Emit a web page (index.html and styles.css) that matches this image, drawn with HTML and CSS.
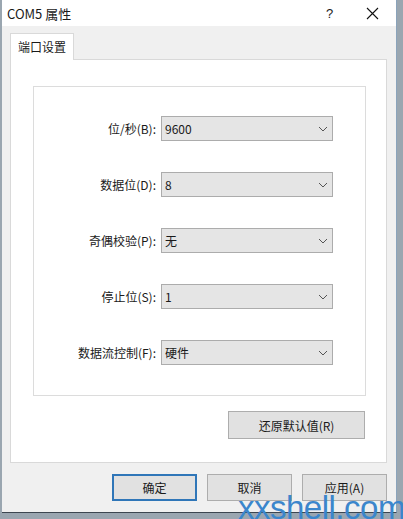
FILE: index.html
```html
<!DOCTYPE html>
<html lang="zh-CN">
<head>
    <meta charset="UTF-8">
    <title>COM5 属性</title>
    <link rel="stylesheet" href="styles.css">
</head>
<body>

<div class="ventana">
    <div class="titulo">
        <span class="titulo-texto">COM5 属性</span>
        <span class="ayuda">?</span>
        <span class="cerrar">
            <svg width="13" height="13" viewBox="0 0 13 13"><path d="M1 1 L12 12 M12 1 L1 12" stroke="#111" stroke-width="1.1" fill="none"/></svg>
        </span>
    </div>
    <div class="cuerpo">
        <div class="pestana">端口设置</div>
        <div class="pagina">
            <div class="grupo">
                <label>位/秒(B):</label>
                <div class="combo"><span>9600</span><svg width="10" height="6" viewBox="0 0 10 6"><path d="M1 1 L5 5 L9 1" stroke="#555" stroke-width="1" fill="none"/></svg></div>
                <label>数据位(D):</label>
                <div class="combo"><span>8</span><svg width="10" height="6" viewBox="0 0 10 6"><path d="M1 1 L5 5 L9 1" stroke="#555" stroke-width="1" fill="none"/></svg></div>
                <label>奇偶校验(P):</label>
                <div class="combo"><span>无</span><svg width="10" height="6" viewBox="0 0 10 6"><path d="M1 1 L5 5 L9 1" stroke="#555" stroke-width="1" fill="none"/></svg></div>
                <label>停止位(S):</label>
                <div class="combo"><span>1</span><svg width="10" height="6" viewBox="0 0 10 6"><path d="M1 1 L5 5 L9 1" stroke="#555" stroke-width="1" fill="none"/></svg></div>
                <label>数据流控制(F):</label>
                <div class="combo"><span>硬件</span><svg width="10" height="6" viewBox="0 0 10 6"><path d="M1 1 L5 5 L9 1" stroke="#555" stroke-width="1" fill="none"/></svg></div>
            </div>
            <div class="fila-reset">
                <button class="boton boton-reset">还原默认值(R)</button>
            </div>
        </div>
        <div class="pie">
            <button class="boton activo">确定</button>
            <button class="boton">取消</button>
            <button class="boton">应用(A)</button>
        </div>
    </div>
</div>

<div class="marca">xxshell.com</div>

</body>
</html>
```

FILE: styles.css
```css
body {
    margin: 0;
    width: 403px;
    height: 519px;
    overflow: hidden;
    position: relative;
    background: #9aa6b0;
    font-family: "Microsoft YaHei UI", "Noto Sans CJK SC", sans-serif;
    font-size: 12px;
    color: #1a1a1a;
}
.ventana {
    margin-left: 2px;
    width: 394px;
    height: 512px;
    background: #f0f0f0;
    border-right: 1px solid #8aa3bb;
    border-bottom: 1px solid #3c4650;
    display: flex;
    flex-direction: column;
}
.titulo {
    height: 26px;
    background: white;
    display: flex;
    align-items: center;
    flex-shrink: 0;
}
.titulo-texto {
    padding-left: 5px;
    font-size: 13px;
    flex: 1;
}
.ayuda {
    width: 16px;
    margin-right: 24px;
    font-family: "Liberation Sans", sans-serif;
    font-size: 13px;
}
.cerrar {
    width: 13px;
    margin-right: 17px;
    display: flex;
}
.cuerpo {
    padding: 7px 9px 0 8px;
    display: flex;
    flex-direction: column;
}
.pestana {
    align-self: flex-start;
    height: 26px;
    line-height: 25px;
    padding: 0 7px;
    background: white;
    border: 1px solid #d9d9d9;
    border-bottom: none;
    position: relative;
    z-index: 1;
}
.pagina {
    height: 404px;
    background: white;
    border: 1px solid #d9d9d9;
    margin-top: -1px;
    padding: 26px 20px 0 22px;
    box-sizing: border-box;
}
.grupo {
    height: 310px;
    box-sizing: border-box;
    border: 1px solid #dcdcdc;
    display: grid;
    grid-template-columns: 122px 172px;
    grid-auto-rows: 25px;
    column-gap: 5px;
    row-gap: 31px;
    padding-top: 29px;
    align-content: start;
}
.grupo label {
    text-align: right;
    line-height: 25px;
}
.combo {
    background: #e5e5e5;
    border: 1px solid #acacac;
    box-sizing: border-box;
    display: flex;
    align-items: center;
    justify-content: space-between;
    padding: 0 4px 0 3px;
}
.fila-reset {
    display: flex;
    justify-content: flex-end;
    margin-top: 15px;
    padding-right: 1px;
}
.boton {
    font-family: inherit;
    font-size: 12px;
    color: #1a1a1a;
    background: #e1e1e1;
    border: 1px solid #adadad;
    width: 85px;
    height: 27px;
    padding: 0;
}
.boton-reset {
    width: 137px;
    height: 28px;
}
.pie {
    display: flex;
    justify-content: flex-end;
    gap: 10px;
    margin-top: 11px;
}
.activo {
    border: 2px solid #2f76b8;
}
.marca {
    position: absolute;
    left: 238px;
    top: 489px;
    font-family: "Liberation Sans", sans-serif;
    font-size: 33px;
    color: #3b86cc;
    letter-spacing: -0.5px;
}
```
